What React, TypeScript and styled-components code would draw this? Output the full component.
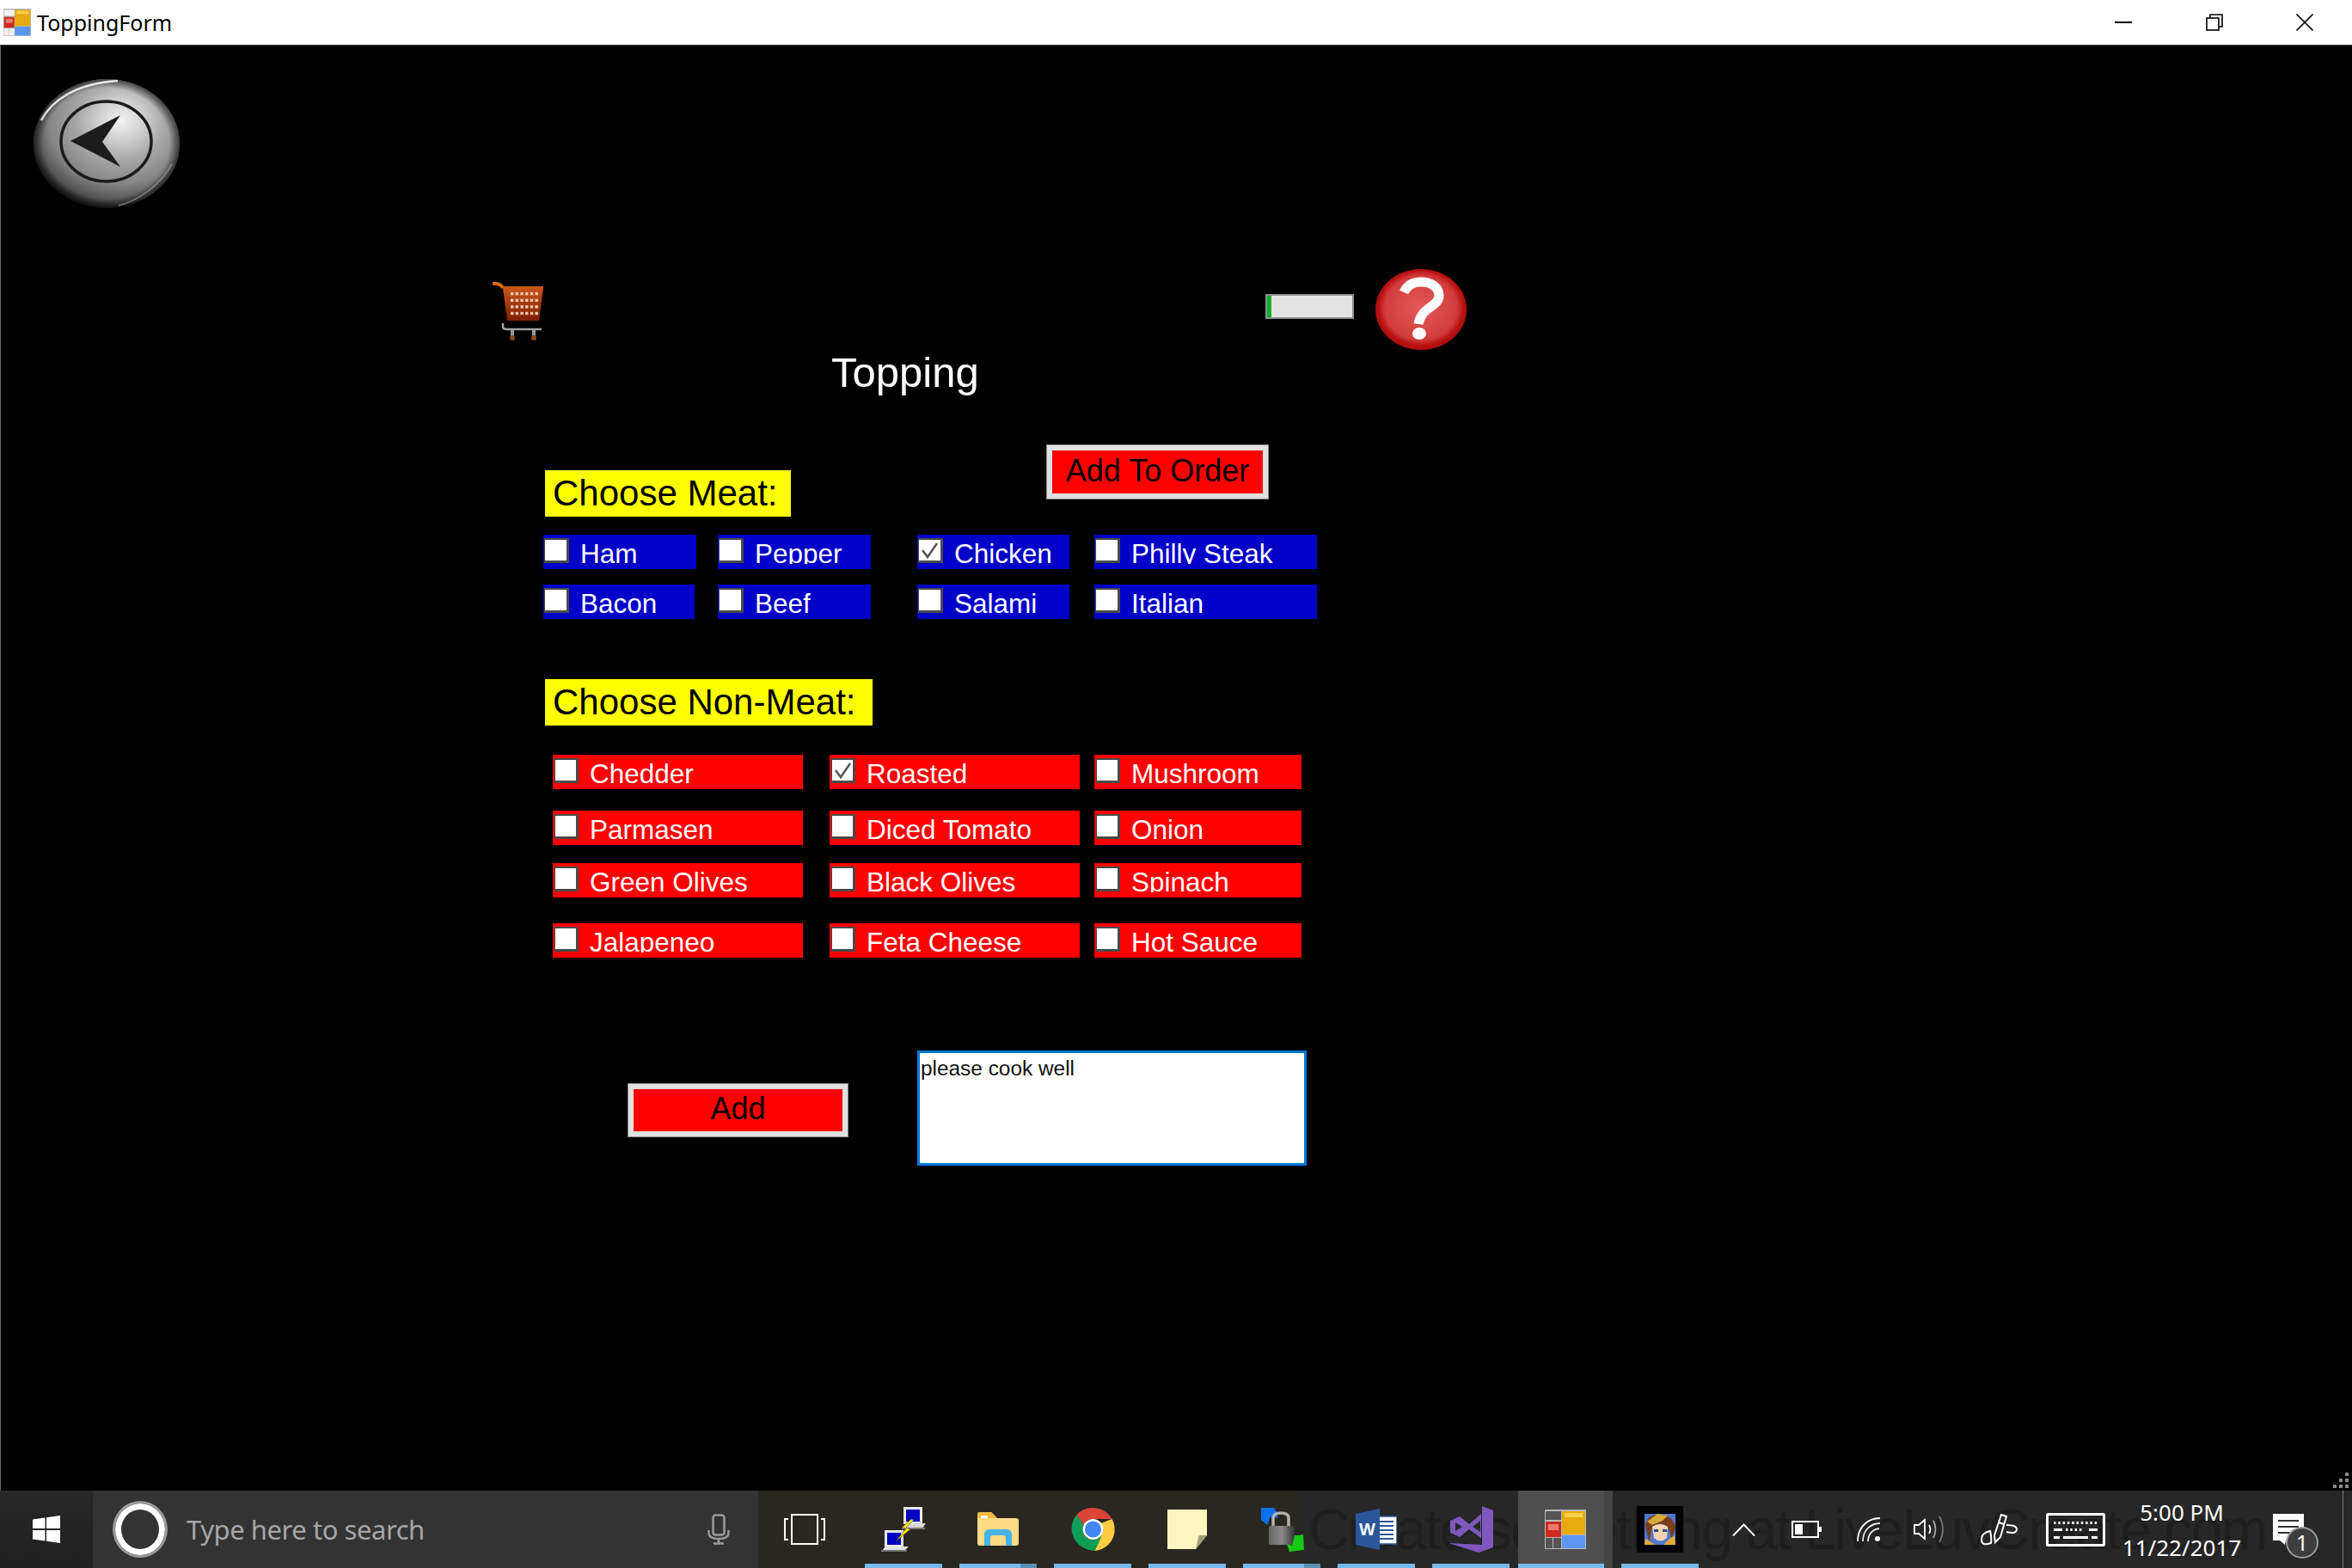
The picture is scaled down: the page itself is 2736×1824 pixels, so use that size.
import React from "react";
import styled, { createGlobalStyle } from "styled-components";

const Global = createGlobalStyle`
  html, body { margin: 0; padding: 0; background: #000; }
  #root { width: 2736px; height: 1824px; overflow: hidden; }
  * { box-sizing: border-box; }
`;

const Screen = styled.div`
  width: 2736px; height: 1824px; display: flex; flex-direction: column;
  font-family: "Liberation Sans", Arial, sans-serif; background: #000;
`;

/* ---------- title bar ---------- */
const TitleBar = styled.header`
  height: 53px; flex: none; display: flex; align-items: center; background: #fff;
  border-bottom: 1px solid #3c3c3c; padding: 0 2px 0 4px;
`;
const TitleText = styled.span`
  font: 25px/1 "Noto Sans", "Open Sans", sans-serif; color: #000; margin-left: 7px;
`;
const WindowControls = styled.div`margin-left: auto; display: flex;`;
const WindowButton = styled.div`
  width: 105.5px; height: 52px; display: flex; align-items: center; justify-content: center;
  svg { display: block; }
`;

/* ---------- form ---------- */
const Form = styled.main`
  position: relative; flex: 1; min-height: 0; background: #000; box-shadow: inset 1px 0 #6a6a6a;
`;
const BackRow = styled.div`padding: 38px 0 0 38px; height: 190px; svg { display: block; }`;
const ToolRow = styled.div`
  margin: 70px 0 0 572px; width: 1134px; height: 94px;
  display: flex; justify-content: space-between; align-items: flex-start;
`;
const CartSlot = styled.div`margin-top: 15px; svg { display: block; }`;
const ToolGroup = styled.div`display: flex; align-items: flex-start; gap: 25px; svg { display: block; }`;
const Progress = styled.div`
  width: 103px; height: 29px; margin-top: 29px; background: #e3e3e3; border: 2px solid #8e8e8e;
`;
const ProgressFill = styled.div`height: 100%; background: #06b025;`;
const Title = styled.h1`
  margin: 0 0 0 967px; height: 52px; font-size: 49px; line-height: 52px; font-weight: 400; color: #fff;
`;
const MeatHead = styled.div`
  margin: 58px 0 0 634px; display: flex; align-items: flex-start; height: 84px;
`;
const Heading = styled.h2<{ $w: number; $top?: number; $left?: number }>`
  margin: ${(p) => p.$top ?? 0}px 0 0 ${(p) => p.$left ?? 0}px; width: ${(p) => p.$w}px; height: 54px;
  background: #ff0; color: #000; font-size: 42px; line-height: 54px; font-weight: 400;
  padding-left: 9px; white-space: nowrap; flex: none;
`;
const ActionButton = styled.button<{ $w: number; $h: number; $left?: number; $top?: number }>`
  flex: none; width: ${(p) => p.$w}px; height: ${(p) => p.$h}px;
  margin: ${(p) => p.$top ?? 0}px 0 0 ${(p) => p.$left ?? 0}px; padding: 0 0 3px;
  background: #f00; color: #000; font: 36px/1 "Liberation Sans", Arial, sans-serif;
  border: 7px solid #e1e1e1; outline: 1px solid #8a8a8a; outline-offset: -1px;
`;
const CheckRow = styled.div<{ $cols: string; $left: number; $top: number }>`
  display: grid; grid-template-columns: ${(p) => p.$cols};
  margin: ${(p) => p.$top}px 0 0 ${(p) => p.$left}px; height: 40px;
`;
const CheckCell = styled.label<{ $w: number; $bg: string; $pad: number }>`
  width: ${(p) => p.$w}px; height: 40px; background: ${(p) => p.$bg};
  display: flex; align-items: flex-start; padding-left: ${(p) => p.$pad}px; overflow: hidden;
`;
const Box = styled.span<{ $w: number }>`
  flex: none; width: ${(p) => p.$w}px; height: 29px; margin-top: 4px; background: #fff;
  border: solid #4a4a4a; border-width: 2px 3px 3px 1px;
  display: flex; align-items: center; justify-content: center;
`;
const CheckText = styled.span`
  display: block; height: 34px; margin-left: 13px; overflow: hidden; white-space: nowrap;
  color: #fff; font-size: 31.5px; line-height: 44px;
`;
const NonMeatHeading = styled.div`margin-left: 634px; padding-top: 70px;`;
const BottomRow = styled.div`
  margin: 108px 0 0 730px; display: flex; align-items: flex-start;
`;
const Notes = styled.div`
  flex: none; width: 453px; height: 134px; margin-left: 80px; background: #fff;
  border: 3px solid #0078d7; padding: 2px 0 0 1px; color: #111; font-size: 24.4px; line-height: 32px;
`;
const Grip = styled.div`
  position: absolute; right: 4px; bottom: 3px; width: 18px; height: 18px;
  svg { display: block; }
`;

/* ---------- taskbar ---------- */
const Taskbar = styled.footer`
  position: relative; height: 90px; flex: none; display: flex; align-items: stretch;
  background: #2a2720;
`;
const GhostBand = styled.div`
  position: absolute; left: 1510px; right: 0; top: 0; bottom: 0; background: #272727; overflow: hidden;
  color: #1e1e1e; font: 66px/90px "Liberation Sans", Arial, sans-serif; white-space: nowrap;
  padding-left: 12px; letter-spacing: -1.8px;
`;
const Start = styled.div`
  position: relative; width: 108px; display: flex; align-items: center; justify-content: center;
  background: linear-gradient(180deg, #282828, #1f1f1f);
`;
const Search = styled.div`
  position: relative; width: 774px; background: #333; display: flex; align-items: center; padding: 0 33px 0 23px;
`;
const Cortana = styled.div`
  flex: none; width: 64px; height: 66px; border-radius: 50%; border: 3px solid #9a9a9a;
  background: #333; box-shadow: inset 0 0 0 7px #fff;
`;
const SearchText = styled.span`
  margin-left: 22px; font: 31px/1 "Noto Sans", "Open Sans", sans-serif; color: #a6a6a6; flex: 1;
  letter-spacing: -0.45px;
`;
const IconSlot = styled.div<{ $w: number }>`
  position: relative; flex: none; width: ${(p) => p.$w}px; display: flex; align-items: center; justify-content: center;
  svg { display: block; }
`;
const AppSlot = styled.div<{ $active?: boolean; $stacked?: boolean }>`
  position: relative; flex: none; width: 110px; display: flex; align-items: center; justify-content: center;
  background: ${(p) => (p.$active ? "#4f4f4f" : "transparent")};
  svg { display: block; }
  &::after {
    content: ""; position: absolute; left: ${(p) => (p.$active ? 0 : 10)}px; right: 10px; bottom: 0; height: 5px;
    background: ${(p) =>
      p.$stacked ? "linear-gradient(90deg, #76b9ed 79%, #5a8fb8 79%)" : "#76b9ed"};
  }
  ${(p) => (p.$active ? "box-shadow: inset -10px 0 #454545;" : "")}
`;
const Clock = styled.div`
  position: relative; flex: none; width: 176px; text-align: center; color: #fff;
  font: 26px/41px "Noto Sans", "Open Sans", sans-serif; padding-top: 5px;
`;
const ClockLine = styled.div`white-space: nowrap;`;
const Notification = styled.div`
  position: relative; flex: 1; display: flex; align-items: center; padding-left: 18px;
  svg { display: block; }
`;
const Badge = styled.span`
  position: absolute; left: 33px; top: 42px; width: 38px; height: 37px; border-radius: 50%;
  background: #3d3d3d; border: 2px solid #9c9c9c; color: #fff; font: 25px/33px "Noto Sans", sans-serif;
  text-align: center;
`;
const EdgeLine = styled.div`
  position: absolute; left: 2725px; top: 0; bottom: 0; width: 1px; background: #777;
`;

/* ---------- drawings ---------- */
const BackIcon = () => (
  <svg width="172" height="152" viewBox="0 0 172 152">
    <defs>
      <radialGradient id="bk" cx="0.6" cy="0.32" r="0.72">
        <stop offset="0" stopColor="#f2f2f2" />
        <stop offset="0.2" stopColor="#d2d2d2" />
        <stop offset="0.42" stopColor="#a8a8a8" />
        <stop offset="0.68" stopColor="#868686" />
        <stop offset="0.86" stopColor="#555" />
        <stop offset="1" stopColor="#1a1a1a" />
      </radialGradient>
      <radialGradient id="bke" cx="0.5" cy="0.5" r="0.5">
        <stop offset="0.86" stopColor="#000" stopOpacity="0" />
        <stop offset="1" stopColor="#000" stopOpacity="0.6" />
      </radialGradient>
    </defs>
    <ellipse cx="86" cy="76" rx="85" ry="75" fill="url(#bk)" />
    <ellipse cx="86" cy="76" rx="85" ry="75" fill="url(#bke)" />
    <path d="M10 49 C22 26 50 6 99 3" fill="none" stroke="#fff" strokeWidth="2.5" opacity="0.85" />
    <path d="M100 148 C125 142 150 122 162 100" fill="none" stroke="#ccc" strokeWidth="1.5" opacity="0.5" />
    <ellipse cx="85.5" cy="73.5" rx="52.5" ry="46.5" fill="none" stroke="#1b1b1b" strokeWidth="3.5" />
    <path d="M44 73 L102 43 L81 74 L102 103 Z" fill="#1c1c1c" />
  </svg>
);

const CartIcon = () => {
  const dots = [];
  for (let r = 0; r < 4; r++)
    for (let c = 0; c < 6; c++)
      dots.push(<rect key={`${r}-${c}`} x={22 + c * 5.7} y={12 + r * 7.6} width="3.4" height="3.4" fill="#efc9b4" />);
  return (
    <svg width="60" height="68" viewBox="0 0 60 68">
      <defs>
        <linearGradient id="ct" x1="0" y1="0" x2="0" y2="1">
          <stop offset="0" stopColor="#c9541a" />
          <stop offset="1" stopColor="#7e1e00" />
        </linearGradient>
      </defs>
      <path d="M1 2 Q10 1 13 7" fill="none" stroke="#d96a10" strokeWidth="4" />
      <path d="M13 7 L60 7 L55 45 L18 45 Z" fill="url(#ct)" />
      <rect x="13" y="5" width="47" height="3" fill="#c55a12" />
      {dots}
      <path d="M13 48 V52 Q13 55 17 55 H58" fill="none" stroke="#a0a0a0" strokeWidth="2.5" />
      <rect x="22" y="56" width="4" height="7" fill="#999" />
      <rect x="47" y="56" width="4" height="7" fill="#999" />
      <circle cx="24" cy="65" r="3" fill="#8a4a20" />
      <circle cx="49" cy="65" r="3" fill="#8a4a20" />
    </svg>
  );
};

const HelpIcon = () => (
  <svg width="106" height="94" viewBox="0 0 106 94">
    <defs>
      <radialGradient id="hp" cx="0.5" cy="0.48" r="0.55">
        <stop offset="0" stopColor="#e65a5a" />
        <stop offset="0.72" stopColor="#d23c3c" />
        <stop offset="0.85" stopColor="#b81010" />
        <stop offset="1" stopColor="#a80c0c" />
      </radialGradient>
    </defs>
    <ellipse cx="53" cy="47" rx="53" ry="47" fill="url(#hp)" />
    <path d="M33 27 C37 18 44 15 53 15 C66 15 74 22 74 31 C74 44 53 44 50 64" fill="none" stroke="#fff" strokeWidth="11" />
    <ellipse cx="51" cy="75" rx="8" ry="7" fill="#fff" />
  </svg>
);

const FormIcon = ({ w, h, cell }: { w: number; h: number; cell: string }) => (
  <svg width={w} height={h} viewBox="0 0 48 46" preserveAspectRatio="none">
    <rect x="0" y="0" width="48" height="46" fill="#b8b8b8" />
    <rect x="1" y="2" width="18" height="10" fill={cell} />
    <rect x="20" y="2" width="27" height="27" fill="#e6a90e" />
    <rect x="23" y="4" width="21" height="5" fill="#f7d14a" />
    <rect x="1" y="14" width="18" height="18" fill="#cf2a1e" />
    <rect x="4" y="17" width="12" height="7" fill="#ee7a70" />
    <rect x="20" y="30" width="27" height="15" fill="#5b97f2" />
    <rect x="1" y="33" width="8" height="12" fill={cell} />
    <rect x="10" y="33" width="9" height="12" fill={cell} />
  </svg>
);

const Minimize = () => <svg width="20" height="2"><rect width="20" height="2" fill="#000" /></svg>;
const Restore = () => (
  <svg width="20" height="20" viewBox="0 0 20 20" fill="none" stroke="#000" strokeWidth="1.6">
    <rect x="1" y="5" width="14" height="14" />
    <path d="M5 5 V1 H19 V15 H15" />
  </svg>
);
const CloseX = () => (
  <svg width="20" height="20" viewBox="0 0 20 20" stroke="#111" strokeWidth="1.6">
    <path d="M0.5 0.5 L19.5 19.5 M19.5 0.5 L0.5 19.5" />
  </svg>
);

const WinLogo = () => (
  <svg width="32" height="32" viewBox="0 0 32 32" fill="#fff">
    <path d="M0 4.5 L14.5 2.5 V15 H0 Z M16 2.2 L32 0 V15 H16 Z M0 17 H14.5 V29.5 L0 27.5 Z M16 17 H32 V32 L16 29.8 Z" />
  </svg>
);
const Mic = () => (
  <svg width="26" height="36" viewBox="0 0 26 36" fill="none" stroke="#9a9a9a" strokeWidth="2.5">
    <rect x="6.5" y="1.5" width="13" height="23" rx="3" />
    <path d="M1.5 19 V22 Q1.5 29 13 29 Q24.5 29 24.5 22 V19 M13 29 V34 M7 34.5 H19" />
  </svg>
);
const TaskView = () => (
  <svg width="48" height="36" viewBox="0 0 48 36" fill="none" stroke="#fff" strokeWidth="2">
    <rect x="9" y="1" width="30" height="34" />
    <path d="M5 6 H1 V30 H5 M43 6 H47 V30 H43" />
  </svg>
);
const Putty = () => (
  <svg width="52" height="52" viewBox="0 0 52 52">
    <rect x="26" y="0" width="22" height="20" fill="#e8e8e8" />
    <rect x="29" y="3" width="16" height="14" fill="#0000c0" />
    <path d="M24 25 L48 25 L52 19 L30 19 Z" fill="#d8d8d8" />
    <rect x="24" y="24" width="27" height="2" fill="#777" />
    <rect x="4" y="27" width="22" height="20" fill="#e8e8e8" />
    <rect x="7" y="30" width="16" height="14" fill="#0000c0" />
    <path d="M0 52 L26 52 L32 46 L5 46 Z" fill="#e2e2e2" />
    <rect x="0" y="50" width="30" height="2" fill="#777" />
    <path d="M35 14 L24 24 L29 25 L17 40 L34 26 L29 24 L38 15 Z" fill="#ffee00" stroke="#333" strokeWidth="0.6" />
  </svg>
);
const Folder = () => (
  <svg width="48" height="40" viewBox="0 0 48 40">
    <path d="M0 3 Q0 0 3 0 H16 L23 7 H45 Q48 7 48 10 V36 Q48 39 45 39 H3 Q0 39 0 36 Z" fill="#ffdb84" />
    <path d="M0 3 Q0 0 3 0 H16 L23 7 H0 Z" fill="#f2bb42" />
    <rect x="4" y="4" width="8" height="3" fill="#fff" />
    <path d="M8 39 V26 Q8 20 14 20 H34 Q40 20 40 26 V39 H33 V30 Q33 27 30 27 H18 Q15 27 15 30 V39 Z" fill="#45b4e8" />
  </svg>
);
const Chrome = () => (
  <svg width="51" height="50" viewBox="0 0 50 50">
    <path d="M25 0 A25 25 0 0 1 47 13 H25 A12 12 0 0 0 14 20 L6 8 A25 25 0 0 1 25 0 Z" fill="#db4437" />
    <path d="M6 8 L14 20 A12 12 0 0 0 22 37 L15 47 A25 25 0 0 1 6 8 Z" fill="#0f9d58" />
    <path d="M47 13 A25 25 0 0 1 27 50 L35 32 A12 12 0 0 0 34 18 Z" fill="#ffcd40" />
    <path d="M15 47 L22 37 A12 12 0 0 0 35 32 L27 50 A25 25 0 0 1 15 47 Z" fill="#0f9d58" />
    <circle cx="25" cy="25" r="12" fill="#fff" />
    <circle cx="25" cy="25" r="9.5" fill="#4285f4" />
  </svg>
);
const Sticky = () => (
  <svg width="46" height="46" viewBox="0 0 46 46">
    <path d="M0 0 H46 V30 L33 46 H0 Z" fill="#fcf5bf" />
    <path d="M46 30 H38 Q36 30 36 33 L33 46 Z" fill="#a09c78" />
  </svg>
);
const LockIcon = () => (
  <svg width="51" height="51" viewBox="0 0 51 51">
    <defs>
      <linearGradient id="lk" x1="0" y1="0" x2="1" y2="0">
        <stop offset="0" stopColor="#666" />
        <stop offset="0.5" stopColor="#8a8a8a" />
        <stop offset="1" stopColor="#333" />
      </linearGradient>
    </defs>
    <path d="M1 0 H16 L20 6 V12 L12 10 L8 20 L1 14 Z" fill="#0a6ff0" />
    <path d="M15 23 V12 Q15 6 24 6 Q33 6 33 12 V23" fill="none" stroke="#b0b0b0" strokeWidth="3.5" />
    <rect x="10" y="21" width="30" height="22" rx="2" fill="url(#lk)" />
    <path d="M40 32 L45 32 L50 31 L51 49 L34 51 L31 42 L37 44 Z" fill="#14c814" />
  </svg>
);
const Word = () => (
  <svg width="48" height="48" viewBox="0 0 48 48">
    <rect x="20" y="9" width="28" height="32" fill="#fff" stroke="#2b579a" strokeWidth="1.5" />
    <path d="M26 15 H44 M26 20 H44 M26 25 H44 M26 30 H44 M26 35 H44" stroke="#2b579a" strokeWidth="2" />
    <path d="M0 6 L28 0 V48 L0 42 Z" fill="#2b579a" />
    <text x="4" y="31" fill="#fff" fontFamily="Liberation Sans, sans-serif" fontWeight="700" fontSize="20">W</text>
  </svg>
);
const VsIcon = () => (
  <svg width="52" height="54" viewBox="0 0 52 54">
    <path fill="#7f58bd" d="M39 0 L52 5 V48 L35 54 L0 43 L39 45 Z" />
    <path
      fill="#7f58bd"
      fillRule="evenodd"
      d="M2 17 L13 12 L24 21 L38 9 V37 L24 27 L13 36 L2 31 Z M8 19 V29 L16 24 Z M28 24 L37 30 V17 Z"
    />
  </svg>
);
const Avatar = () => (
  <svg width="54" height="54" viewBox="0 0 54 54">
    <rect width="54" height="54" fill="#000" />
    <rect x="9" y="9" width="36" height="36" fill="#4f78d0" />
    <path d="M10 22 Q13 9 27 10 Q41 10 45 24 L41 38 L36 24 Q27 17 18 24 L14 42 Z" fill="#7a3e18" />
    <path d="M18 24 Q27 18 36 24 L35 37 Q27 44 20 37 Z" fill="#f6d4b0" />
    <path d="M10 38 L22 45 H9 Z M44 34 L45 45 H31 L38 38 Z" fill="#e8a838" />
    <path d="M12 18 L24 9 L36 11 L30 17 L18 22 Z" fill="#d8a83a" />
    <rect x="20" y="27" width="5" height="3" fill="#2a4a8a" />
    <rect x="30" y="27" width="5" height="3" fill="#2a4a8a" />
  </svg>
);
const Chevron = () => (
  <svg width="27" height="15" viewBox="0 0 27 15" fill="none" stroke="#fff" strokeWidth="2">
    <path d="M1 14.5 L13.5 1.5 L26 14.5" />
  </svg>
);
const Battery = () => (
  <svg width="35" height="20" viewBox="0 0 35 20" fill="none">
    <rect x="1" y="1" width="30" height="18" stroke="#fff" strokeWidth="2" />
    <rect x="4" y="4" width="9" height="12" fill="#fff" />
    <rect x="32" y="7" width="3" height="6" fill="#fff" />
  </svg>
);
const Wifi = () => (
  <svg width="28" height="28" viewBox="0 0 28 28" fill="none" stroke="#fff" strokeWidth="1.8">
    <path d="M1 28 C1 12 12 1 27 1" />
    <path d="M7 28 C7 16 15 7 27 7" opacity="0.9" />
    <path d="M13 28 C13 20 18 14 26 13" opacity="0.9" />
    <ellipse cx="24" cy="25" rx="3" ry="3" fill="#fff" stroke="none" />
  </svg>
);
const Volume = () => (
  <svg width="36" height="32" viewBox="0 0 36 32" fill="none" stroke="#fff" strokeWidth="1.8">
    <path d="M1 11 H6 L13 5 V27 L6 21 H1 Z" />
    <path d="M18 11 Q21 16 18 21" />
    <path d="M23 6 Q28 16 23 26" stroke="#aaa" />
    <path d="M30 1 Q38 16 30 31" stroke="#777" />
  </svg>
);
const Pen = () => (
  <svg width="43" height="40" viewBox="0 0 43 40" fill="none" stroke="#fff" strokeWidth="2">
    <path d="M24 3 L30 5 L23 29 L17 35 L16 27 Z M21 12 L27 14" />
    <path d="M30 15 Q42 15 42 20 Q42 26 30 23" />
    <path d="M12 36 Q1 40 1 32 Q1 24 11 22 Q13 30 12 36 Z" />
  </svg>
);
const Keyboard = () => {
  const row1 = Array.from({ length: 10 }, (_, i) => <rect key={i} x={9 + i * 5.3} y="10" width="2.5" height="3" fill="#fff" />);
  const row2 = Array.from({ length: 4 }, (_, i) => <rect key={i} x={23 + i * 5.3} y="18" width="2.5" height="3" fill="#fff" />);
  return (
    <svg width="69" height="39" viewBox="0 0 69 39">
      <rect x="1.5" y="1.5" width="66" height="36" rx="1" fill="none" stroke="#fff" strokeWidth="3" />
      {row1}
      <rect x="9" y="18" width="10" height="3" fill="#fff" />
      {row2}
      <rect x="50" y="18" width="10" height="3" fill="#fff" />
      <rect x="9" y="27" width="7" height="3" fill="#fff" />
      <rect x="20" y="27" width="29" height="3" fill="#fff" />
      <rect x="53" y="27" width="7" height="3" fill="#fff" />
    </svg>
  );
};
const Note = () => (
  <svg width="36" height="36" viewBox="0 0 36 36">
    <path d="M0 0 H36 V31 H15 L14 36 L8 31 H0 Z" fill="#fff" />
    <path d="M6 8 H30 M6 15 H30 M6 22 H24" stroke="#333" strokeWidth="2" />
  </svg>
);
const GripDots = () => (
  <svg width="18" height="18" viewBox="0 0 18 18" fill="#8a8a8a">
    <rect x="14" y="0" width="4" height="4" />
    <rect x="7" y="7" width="4" height="4" />
    <rect x="14" y="7" width="4" height="4" />
    <rect x="0" y="14" width="4" height="4" />
    <rect x="7" y="14" width="4" height="4" />
    <rect x="14" y="14" width="4" height="4" />
  </svg>
);

const CheckMark = () => (
  <svg width="21" height="21" viewBox="0 0 21 21" fill="none" stroke="#555" strokeWidth="2.5">
    <path d="M2 10 L8 18 L19 2" />
  </svg>
);

/* ---------- data ---------- */
type Item = { label: string; w: number; checked?: boolean };
const BLUE = "#0000c8";
const RED = "#ff0000";
const meatCols = "203px 232px 206px 259px";
const meatRows: { top: number; items: Item[] }[] = [
  { top: 21, items: [{ label: "Ham", w: 178 }, { label: "Pepper", w: 178 }, { label: "Chicken", w: 177, checked: true }, { label: "Philly Steak", w: 259 }] },
  { top: 18, items: [{ label: "Bacon", w: 176 }, { label: "Beef", w: 178 }, { label: "Salami", w: 177 }, { label: "Italian", w: 259 }] },
];
const vegCols = "322px 308px 241px";
const veg = (a: string, b: string, c: string, checked = false): Item[] => [
  { label: a, w: 291 },
  { label: b, w: 291, checked },
  { label: c, w: 241 },
];
const vegRows: { top: number; items: Item[] }[] = [
  { top: 34, items: veg("Chedder", "Roasted", "Mushroom", true) },
  { top: 25, items: veg("Parmasen", "Diced Tomato", "Onion") },
  { top: 21, items: veg("Green Olives", "Black Olives", "Spinach") },
  { top: 30, items: veg("Jalapeneo", "Feta Cheese", "Hot Sauce") },
];

const Check = ({ item, bg, pad, boxW }: { item: Item; bg: string; pad: number; boxW: number }) => (
  <CheckCell $w={item.w} $bg={bg} $pad={pad}>
    <Box $w={boxW}>{item.checked && <CheckMark />}</Box>
    <CheckText>{item.label}</CheckText>
  </CheckCell>
);

const apps: { icon: React.ReactNode; active?: boolean; stacked?: boolean }[] = [
  { icon: <Putty /> },
  { icon: <Folder />, stacked: true },
  { icon: <Chrome /> },
  { icon: <Sticky /> },
  { icon: <LockIcon />, stacked: true },
  { icon: <Word /> },
  { icon: <VsIcon /> },
  { icon: <FormIcon w={48} h={46} cell="#555" />, active: true },
  { icon: <Avatar /> },
];

export default function App() {
  const progress = 5;
  return (
    <Screen>
      <Global />
      <TitleBar>
        <FormIcon w={32} h={32} cell="#f2f2f2" />
        <TitleText>ToppingForm</TitleText>
        <WindowControls>
          <WindowButton><Minimize /></WindowButton>
          <WindowButton><Restore /></WindowButton>
          <WindowButton><CloseX /></WindowButton>
        </WindowControls>
      </TitleBar>

      <Form>
        <BackRow><BackIcon /></BackRow>
        <ToolRow>
          <CartSlot><CartIcon /></CartSlot>
          <ToolGroup>
            <Progress><ProgressFill style={{ width: `${progress}%` }} /></Progress>
            <HelpIcon />
          </ToolGroup>
        </ToolRow>
        <Title>Topping</Title>
        <MeatHead>
          <Heading $w={286} $top={30}>Choose Meat:</Heading>
          <ActionButton $w={259} $h={64} $left={297}>Add To Order</ActionButton>
        </MeatHead>
        {meatRows.map((row) => (
          <CheckRow key={row.items[0].label} $cols={meatCols} $left={632} $top={row.top}>
            {row.items.map((item) => <Check key={item.label} item={item} bg={BLUE} pad={1} boxW={29} />)}
          </CheckRow>
        ))}
        <NonMeatHeading><Heading $w={381}>Choose Non-Meat:</Heading></NonMeatHeading>
        {vegRows.map((row) => (
          <CheckRow key={row.items[0].label} $cols={vegCols} $left={643} $top={row.top}>
            {row.items.map((item) => <Check key={item.label} item={item} bg={RED} pad={2} boxW={28} />)}
          </CheckRow>
        ))}
        <BottomRow>
          <ActionButton $w={257} $h={63} $top={38}>Add</ActionButton>
          <Notes>please cook well</Notes>
        </BottomRow>
        <Grip><GripDots /></Grip>
      </Form>

      <Taskbar>
        <GhostBand>Create something at LiveLuvCreate.com</GhostBand>
        <Start><WinLogo /></Start>
        <Search>
          <Cortana />
          <SearchText>Type here to search</SearchText>
          <Mic />
        </Search>
        <IconSlot $w={108}><TaskView /></IconSlot>
        <IconSlot $w={6} />
        {apps.map((a, i) => (
          <AppSlot key={i} $active={a.active} $stacked={a.stacked}>{a.icon}</AppSlot>
        ))}
        <IconSlot $w={84}><Chevron /></IconSlot>
        <IconSlot $w={62}><Battery /></IconSlot>
        <IconSlot $w={84}><Wifi /></IconSlot>
        <IconSlot $w={56}><Volume /></IconSlot>
        <IconSlot $w={106}><Pen /></IconSlot>
        <IconSlot $w={72}><Keyboard /></IconSlot>
        <Clock>
          <ClockLine>5:00 PM</ClockLine>
          <ClockLine>11/22/2017</ClockLine>
        </Clock>
        <Notification>
          <Note />
          <Badge>1</Badge>
        </Notification>
        <EdgeLine />
      </Taskbar>
    </Screen>
  );
}
